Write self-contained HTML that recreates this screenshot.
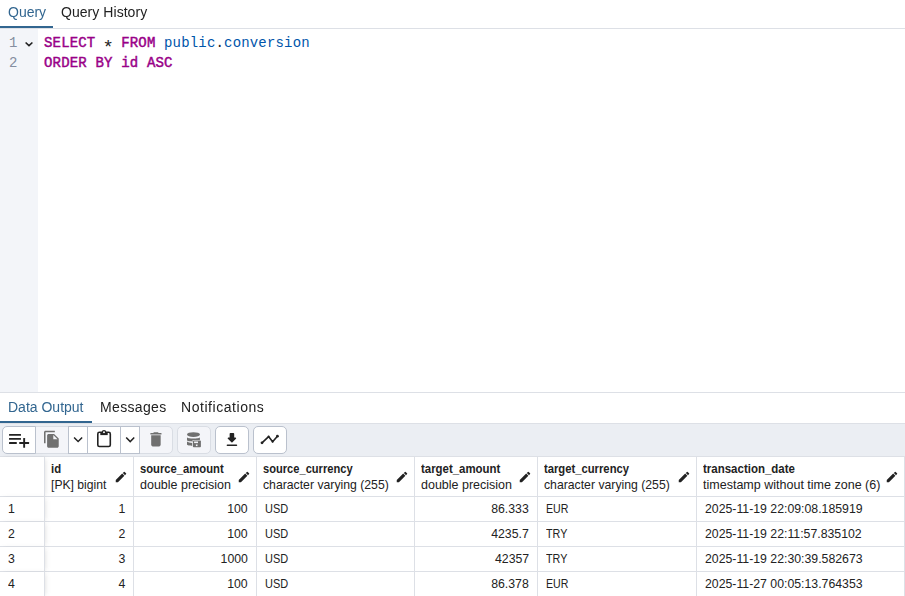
<!DOCTYPE html>
<html><head><meta charset="utf-8">
<style>
*{box-sizing:border-box;margin:0;padding:0}
html,body{width:905px;height:596px;overflow:hidden;background:#fff;font-family:"Liberation Sans",sans-serif;color:#222}
.abs{position:absolute}
#tabs1{left:0;top:0;width:905px;height:29px;border-bottom:1px solid #dde0e6;will-change:transform}
.tab{position:absolute;font-size:14px;line-height:16px;white-space:pre}
.ul{position:absolute;height:2px;background:#326690}
#editor{left:0;top:29px;width:905px;height:363px}
#gutter{left:0;top:0;width:38px;height:363px;background:#f3f5f9}
.ln{position:absolute;left:9px;font-family:"Liberation Mono",monospace;font-size:14px;color:#848ea0;line-height:20px}
.code{position:absolute;left:44px;letter-spacing:0.17px;font-family:"Liberation Mono",monospace;font-size:14px;line-height:20px;white-space:pre;color:#222}
.kw{color:#990088;font-weight:normal;-webkit-text-stroke:0.45px #990088}
.ast{display:inline-block;transform:translateY(3.4px) scale(1.35);transform-origin:50% 35%}
.ty{color:#0055aa}
#sep{left:0;top:392px;width:905px;height:1px;background:#dde0e6}
#toolbar{left:0;top:423px;width:905px;height:34px;background:#ebeef3;border-top:1px solid #dde0e6;border-bottom:1px solid #dde0e6}
.btn{position:absolute;top:2px;height:28px;background:#fff;border:1px solid #bac1cd;z-index:2}
.btn.dis{background:#f4f5f9;border-color:#d9dde4;z-index:1}
#toolbar svg{z-index:3}
#grid{left:0;top:457px;width:905px;height:139px}
.cell{position:absolute;border-right:1px solid #dde0e6;border-bottom:1px solid #dde0e6;font-size:13px;white-space:pre;overflow:hidden}
.hname{position:absolute;left:6px;top:4px;font-weight:bold;line-height:16px}
.htype{position:absolute;left:6px;top:20px;line-height:16px}
.pen{position:absolute;top:13px;right:5px;width:14px;height:14px}
.v{position:absolute;top:0;line-height:24px}
.r{right:8px}
.l{left:8px}
.frz{box-shadow:2px 0 5px -2px rgba(136,136,136,.3);z-index:1;background:#fff}
.frz .v{left:8px}
</style></head><body>
<div id="tabs1" class="abs">
  <div class="tab" style="left:8px;top:4px;color:#326690">Query</div>
  <div class="tab" style="left:61px;top:4px;letter-spacing:0.05px">Query History</div>
  <div class="ul" style="left:0;top:26px;width:53px"></div>
</div>
<div id="editor" class="abs">
  <div id="gutter" class="abs"></div>
  <div class="ln" style="top:4px">1</div>
  <div class="ln" style="top:24px">2</div>
  <svg class="abs" style="left:24px;top:11px" width="10" height="7" viewBox="0 0 10 7"><path d="M1.6 2.5 L5 5.7 L8.4 2.5" fill="none" stroke="#222" stroke-width="1.6"/></svg>
  <div class="code" style="top:4px"><span class="kw">SELECT</span> <span class="ast">*</span> <span class="kw">FROM</span> <span class="ty">public</span><span style="color:#222">.</span><span class="ty">conversion</span></div>
  <div class="code" style="top:24px"><span class="kw">ORDER BY</span> <span class="kw">id</span> <span class="kw">ASC</span></div>
</div>
<div id="sep" class="abs"></div>
<div class="abs" style="left:0;top:393px;width:905px;height:30px;will-change:transform">
  <div class="tab" style="left:8px;top:6px;color:#326690">Data Output</div>
  <div class="tab" style="left:100px;top:6px;letter-spacing:0.35px">Messages</div>
  <div class="tab" style="left:181px;top:6px;letter-spacing:0.55px">Notifications</div>
  <div class="ul" style="left:0;top:28px;width:92px"></div>
</div>
<div id="toolbar" class="abs">
  <div class="btn" style="left:2px;width:34px;border-radius:5px 0 0 5px"></div>
  <div class="btn dis" style="left:35px;width:34px"></div>
  <div class="btn" style="left:68px;width:20px"></div>
  <div class="btn" style="left:87px;width:34px"></div>
  <div class="btn" style="left:120px;width:20px"></div>
  <div class="btn dis" style="left:139px;width:34px;border-radius:0 5px 5px 0"></div>
  <div class="btn dis" style="left:177px;width:34px;border-radius:5px"></div>
  <div class="btn" style="left:215px;width:34px;border-radius:5px"></div>
  <div class="btn" style="left:253px;width:34px;border-radius:5px"></div>
  <svg class="abs" style="left:0;top:-1px" width="300" height="34" viewBox="0 0 300 34">
    <g fill="#222">
      <rect x="9" y="10.9" width="12" height="1.9" rx=".5"/>
      <rect x="9" y="14.95" width="12" height="1.9" rx=".5"/>
      <rect x="9" y="19" width="7.8" height="1.9" rx=".5"/>
      <rect x="19.2" y="19" width="9.9" height="1.9" rx=".5"/>
      <rect x="23.2" y="15" width="1.9" height="9.8" rx=".5"/>
    </g>
    <path transform="translate(42.45 7) scale(.775)" d="M16 1H4c-1.1 0-2 .9-2 2v14h2V3h12V1zm-1 4l6 6v10c0 1.1-.9 2-2 2H7.99C6.89 23 6 22.1 6 21l.01-14c0-1.1.89-2 1.99-2h7zm-1 7h5.5L14 6.5V12z" fill="#707070"/>
    <path transform="translate(69 7.4) scale(.76)" d="M16.59 8.59 12 13.17 7.41 8.59 6 10l6 6 6-6z" fill="#222"/>
    <rect x="97.8" y="9.3" width="12.5" height="14.2" rx="1.6" fill="none" stroke="#222" stroke-width="1.6"/>
    <rect x="100.3" y="9.6" width="7.4" height="2.5" fill="#222"/>
    <circle cx="104" cy="9.2" r="1.6" fill="#fff" stroke="#222" stroke-width="1.3"/>
    <path transform="translate(121.1 7.47) scale(.76)" d="M16.59 8.59 12 13.17 7.41 8.59 6 10l6 6 6-6z" fill="#222"/>
    <path transform="translate(146.45 6.8) scale(.79)" d="M6 19c0 1.1.9 2 2 2h8c1.1 0 2-.9 2-2V7H6v12zM19 4h-3.5l-1-1h-5l-1 1H5v2h14V4z" fill="#707070"/>
    <g fill="#707070">
      <ellipse cx="193.45" cy="11.55" rx="6.45" ry="2.4"/>
      <path d="M187 14.3C187 15.1 190 15.6 193.45 15.6S199.9 15.1 199.9 14.3V17.3C199.9 18.1 196.9 18.7 193.45 18.7S187 18.1 187 17.3Z"/>
      <path d="M187 18.6C188 19.4 190 19.9 192.4 20V23C190 22.9 187 22.3 187 21.6Z"/>
      <rect x="192.4" y="17" width="9" height="7.8" rx="1" fill="#f4f5f9"/>
      <rect x="192.9" y="17.5" width="8" height="6.8" rx=".8"/>
    </g>
    <rect x="194.1" y="18.5" width="3.9" height="1.6" fill="#f4f5f9"/>
    <rect x="195.9" y="21.5" width="1.6" height="1.6" fill="#f4f5f9"/>
    <path transform="translate(222.8 7.7) scale(.76)" d="M16.59 9H15V4c0-.55-.45-1-1-1h-4c-.55 0-1 .45-1 1v5H7.41c-.89 0-1.34 1.08-.71 1.71l4.59 4.59c.39.39 1.02.39 1.41 0l4.59-4.59c.63-.63.19-1.71-.7-1.71zM5 19c0 .55.45 1 1 1h12c.55 0 1-.45 1-1s-.45-1-1-1H6c-.55 0-1 .45-1 1z" fill="#222"/>
    <polyline points="262,19.8 268.6,13.6 272.6,18.7 277.4,13.2" fill="none" stroke="#222" stroke-width="1.6" stroke-linejoin="round"/>
    <circle cx="262" cy="19.8" r="1.4" fill="#222"/>
    <circle cx="268.6" cy="13.6" r="1" fill="#222"/>
    <circle cx="272.6" cy="18.7" r="1" fill="#222"/>
    <circle cx="277.4" cy="13.2" r="1.4" fill="#222"/>
  </svg>
</div>
<div id="grid" class="abs">
<div class="cell frz" style="left:0px;top:0;width:45px;height:40px"></div>
<div class="cell" style="left:45px;top:0;width:89px;height:40px"><div class="hname" style="transform:scaleX(0.870);transform-origin:left">id</div><div class="htype" style="transform:scaleX(0.935);transform-origin:left">[PK] bigint</div><svg class="pen" viewBox="0 0 24 24"><path d="M3 17.25V21h3.75L17.81 9.94l-3.75-3.75L3 17.25zM20.71 7.04c.39-.39.39-1.02 0-1.41l-2.34-2.34a.9959.9959 0 0 0-1.41 0l-1.83 1.83 3.75 3.75 1.83-1.83z" fill="#222"/></svg></div>
<div class="cell" style="left:134px;top:0;width:123px;height:40px"><div class="hname" style="transform:scaleX(0.864);transform-origin:left">source_amount</div><div class="htype" style="transform:scaleX(0.961);transform-origin:left">double precision</div><svg class="pen" viewBox="0 0 24 24"><path d="M3 17.25V21h3.75L17.81 9.94l-3.75-3.75L3 17.25zM20.71 7.04c.39-.39.39-1.02 0-1.41l-2.34-2.34a.9959.9959 0 0 0-1.41 0l-1.83 1.83 3.75 3.75 1.83-1.83z" fill="#222"/></svg></div>
<div class="cell" style="left:257px;top:0;width:158px;height:40px"><div class="hname" style="transform:scaleX(0.855);transform-origin:left">source_currency</div><div class="htype" style="transform:scaleX(0.941);transform-origin:left">character varying (255)</div><svg class="pen" viewBox="0 0 24 24"><path d="M3 17.25V21h3.75L17.81 9.94l-3.75-3.75L3 17.25zM20.71 7.04c.39-.39.39-1.02 0-1.41l-2.34-2.34a.9959.9959 0 0 0-1.41 0l-1.83 1.83 3.75 3.75 1.83-1.83z" fill="#222"/></svg></div>
<div class="cell" style="left:415px;top:0;width:123px;height:40px"><div class="hname" style="transform:scaleX(0.879);transform-origin:left">target_amount</div><div class="htype" style="transform:scaleX(0.961);transform-origin:left">double precision</div><svg class="pen" viewBox="0 0 24 24"><path d="M3 17.25V21h3.75L17.81 9.94l-3.75-3.75L3 17.25zM20.71 7.04c.39-.39.39-1.02 0-1.41l-2.34-2.34a.9959.9959 0 0 0-1.41 0l-1.83 1.83 3.75 3.75 1.83-1.83z" fill="#222"/></svg></div>
<div class="cell" style="left:538px;top:0;width:159px;height:40px"><div class="hname" style="transform:scaleX(0.865);transform-origin:left">target_currency</div><div class="htype" style="transform:scaleX(0.941);transform-origin:left">character varying (255)</div><svg class="pen" viewBox="0 0 24 24"><path d="M3 17.25V21h3.75L17.81 9.94l-3.75-3.75L3 17.25zM20.71 7.04c.39-.39.39-1.02 0-1.41l-2.34-2.34a.9959.9959 0 0 0-1.41 0l-1.83 1.83 3.75 3.75 1.83-1.83z" fill="#222"/></svg></div>
<div class="cell" style="left:697px;top:0;width:208px;height:40px"><div class="hname" style="transform:scaleX(0.884);transform-origin:left">transaction_date</div><div class="htype" style="transform:scaleX(0.963);transform-origin:left">timestamp without time zone (6)</div><svg class="pen" viewBox="0 0 24 24"><path d="M3 17.25V21h3.75L17.81 9.94l-3.75-3.75L3 17.25zM20.71 7.04c.39-.39.39-1.02 0-1.41l-2.34-2.34a.9959.9959 0 0 0-1.41 0l-1.83 1.83 3.75 3.75 1.83-1.83z" fill="#222"/></svg></div>
<div class="cell frz" style="left:0px;top:40px;width:45px;height:25px"><div class="v l" style="transform:scaleX(0.945);transform-origin:left">1</div></div>
<div class="cell" style="left:45px;top:40px;width:89px;height:25px"><div class="v r" style="transform:scaleX(0.945);transform-origin:right">1</div></div>
<div class="cell" style="left:134px;top:40px;width:123px;height:25px"><div class="v r" style="transform:scaleX(0.945);transform-origin:right">100</div></div>
<div class="cell" style="left:257px;top:40px;width:158px;height:25px"><div class="v l" style="transform:scaleX(0.845);transform-origin:left">USD</div></div>
<div class="cell" style="left:415px;top:40px;width:123px;height:25px"><div class="v r" style="transform:scaleX(0.945);transform-origin:right">86.333</div></div>
<div class="cell" style="left:538px;top:40px;width:159px;height:25px"><div class="v l" style="transform:scaleX(0.816);transform-origin:left">EUR</div></div>
<div class="cell" style="left:697px;top:40px;width:208px;height:25px"><div class="v l" style="transform:scaleX(0.945);transform-origin:left">2025-11-19 22:09:08.185919</div></div>
<div class="cell frz" style="left:0px;top:65px;width:45px;height:25px"><div class="v l" style="transform:scaleX(0.945);transform-origin:left">2</div></div>
<div class="cell" style="left:45px;top:65px;width:89px;height:25px"><div class="v r" style="transform:scaleX(0.945);transform-origin:right">2</div></div>
<div class="cell" style="left:134px;top:65px;width:123px;height:25px"><div class="v r" style="transform:scaleX(0.945);transform-origin:right">100</div></div>
<div class="cell" style="left:257px;top:65px;width:158px;height:25px"><div class="v l" style="transform:scaleX(0.845);transform-origin:left">USD</div></div>
<div class="cell" style="left:415px;top:65px;width:123px;height:25px"><div class="v r" style="transform:scaleX(0.945);transform-origin:right">4235.7</div></div>
<div class="cell" style="left:538px;top:65px;width:159px;height:25px"><div class="v l" style="transform:scaleX(0.827);transform-origin:left">TRY</div></div>
<div class="cell" style="left:697px;top:65px;width:208px;height:25px"><div class="v l" style="transform:scaleX(0.945);transform-origin:left">2025-11-19 22:11:57.835102</div></div>
<div class="cell frz" style="left:0px;top:90px;width:45px;height:25px"><div class="v l" style="transform:scaleX(0.945);transform-origin:left">3</div></div>
<div class="cell" style="left:45px;top:90px;width:89px;height:25px"><div class="v r" style="transform:scaleX(0.945);transform-origin:right">3</div></div>
<div class="cell" style="left:134px;top:90px;width:123px;height:25px"><div class="v r" style="transform:scaleX(0.945);transform-origin:right">1000</div></div>
<div class="cell" style="left:257px;top:90px;width:158px;height:25px"><div class="v l" style="transform:scaleX(0.845);transform-origin:left">USD</div></div>
<div class="cell" style="left:415px;top:90px;width:123px;height:25px"><div class="v r" style="transform:scaleX(0.945);transform-origin:right">42357</div></div>
<div class="cell" style="left:538px;top:90px;width:159px;height:25px"><div class="v l" style="transform:scaleX(0.827);transform-origin:left">TRY</div></div>
<div class="cell" style="left:697px;top:90px;width:208px;height:25px"><div class="v l" style="transform:scaleX(0.945);transform-origin:left">2025-11-19 22:30:39.582673</div></div>
<div class="cell frz" style="left:0px;top:115px;width:45px;height:25px"><div class="v l" style="transform:scaleX(0.945);transform-origin:left">4</div></div>
<div class="cell" style="left:45px;top:115px;width:89px;height:25px"><div class="v r" style="transform:scaleX(0.945);transform-origin:right">4</div></div>
<div class="cell" style="left:134px;top:115px;width:123px;height:25px"><div class="v r" style="transform:scaleX(0.945);transform-origin:right">100</div></div>
<div class="cell" style="left:257px;top:115px;width:158px;height:25px"><div class="v l" style="transform:scaleX(0.845);transform-origin:left">USD</div></div>
<div class="cell" style="left:415px;top:115px;width:123px;height:25px"><div class="v r" style="transform:scaleX(0.945);transform-origin:right">86.378</div></div>
<div class="cell" style="left:538px;top:115px;width:159px;height:25px"><div class="v l" style="transform:scaleX(0.816);transform-origin:left">EUR</div></div>
<div class="cell" style="left:697px;top:115px;width:208px;height:25px"><div class="v l" style="transform:scaleX(0.945);transform-origin:left">2025-11-27 00:05:13.764353</div></div>
</div>
</body></html>
